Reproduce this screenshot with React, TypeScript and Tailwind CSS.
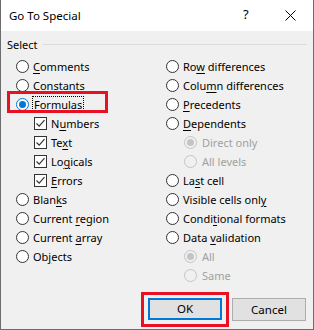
import React from "react";

type Lbl = [string, string, string];

function Radio({ checked = false, disabled = false }: { checked?: boolean; disabled?: boolean }) {
  const border = disabled ? "border-[#c4c4c4]" : checked ? "border-[#0078d7]" : "border-[#333333]";
  const bg = disabled ? "bg-[#f0f0f0]" : "bg-white";
  return (
    <span className={`w-[13px] h-[13px] shrink-0 rounded-full border ${border} ${bg} flex items-center justify-center`}>
      {checked && (
        <span className={`w-[7px] h-[7px] rounded-full ${disabled ? "bg-[#c4c4c4]" : "bg-[#0078d7]"}`} />
      )}
    </span>
  );
}

function Check() {
  return (
    <span className="w-[13px] h-[13px] shrink-0 border border-[#333333] bg-white flex items-center justify-center">
      <svg width="11" height="11" viewBox="0 0 11 11">
        <polyline points="1.5,5.5 4.2,8.2 9.5,2.2" fill="none" stroke="#333333" strokeWidth="1.2" />
      </svg>
    </span>
  );
}

function Text({ l, disabled = false }: { l: Lbl; disabled?: boolean }) {
  return (
    <span className={`whitespace-nowrap ${disabled ? "text-[#a0a0a0]" : "text-black"}`}>
      {l[0]}
      {l[1] && <span className="underline underline-offset-[2px]">{l[1]}</span>}
      {l[2]}
    </span>
  );
}

function RadioRow({ l, checked, disabled, indent = false }: { l: Lbl; checked?: boolean; disabled?: boolean; indent?: boolean }) {
  return (
    <div className={`h-[19px] flex items-center ${indent ? "pl-[18px] gap-[5px]" : "gap-[4px]"}`}>
      <Radio checked={checked} disabled={disabled} />
      <Text l={l} disabled={disabled} />
    </div>
  );
}

function CheckRow({ l }: { l: Lbl }) {
  return (
    <div className="h-[19px] flex items-center gap-[4px] pl-[18px]">
      <Check />
      <Text l={l} />
    </div>
  );
}

export default function App() {
  return (
    <div
      className="w-[314px] h-[330px] bg-[#f0f0f0] border-x border-b border-[#6d6d6d] flex flex-col text-[11px] leading-none text-black"
      style={{ fontFamily: "'Noto Sans', 'Open Sans', sans-serif" }}
    >
      <div className="h-[31px] bg-white flex items-center pl-[8px] relative shrink-0">
        <span className="text-[11.5px]">Go To Special</span>
        <span className="absolute left-[242px] top-[8px] text-[13px]">?</span>
        <svg className="absolute left-[284px] top-[10px]" width="11" height="11" viewBox="0 0 11 11">
          <path d="M0.5 0.5 L10.5 10.5 M10.5 0.5 L0.5 10.5" stroke="#000" strokeWidth="1" />
        </svg>
      </div>

      <div className="h-[25px] flex items-center pl-[6px] pr-[6px] mt-[1px] gap-[5px]">
        <span>Select</span>
        <div className="flex-1 h-px bg-[#dcdcdc]" />
      </div>

      <div className="flex">
        <div className="w-[165px] pl-[15px] flex flex-col">
          <RadioRow l={["", "C", "omments"]} />
          <RadioRow l={["C", "o", "nstants"]} />
          <div className="h-[19px] flex items-center gap-[3px] relative">
            <Radio checked />
            <span className="border border-dotted border-black px-[1px] py-[2px]">
              <Text l={["", "F", "ormulas"]} />
            </span>
            <div className="absolute left-[-9px] top-[-4px] w-[101px] h-[22px] border-[3px] border-[#e81123]" />
          </div>
          <CheckRow l={["N", "u", "mbers"]} />
          <CheckRow l={["Te", "x", "t"]} />
          <CheckRow l={["Lo", "g", "icals"]} />
          <CheckRow l={["", "E", "rrors"]} />
          <RadioRow l={["Blan", "k", "s"]} />
          <RadioRow l={["Current ", "r", "egion"]} />
          <RadioRow l={["Current ", "a", "rray"]} />
          <RadioRow l={["Ob", "j", "ects"]} />
        </div>
        <div className="flex flex-col">
          <RadioRow l={["Ro", "w", " differences"]} />
          <RadioRow l={["Colu", "m", "n differences"]} />
          <RadioRow l={["", "P", "recedents"]} />
          <RadioRow l={["", "D", "ependents"]} />
          <RadioRow l={["Direct only", "", ""]} checked disabled indent />
          <RadioRow l={["All levels", "", ""]} disabled indent />
          <RadioRow l={["La", "s", "t cell"]} />
          <RadioRow l={["Visible cells onl", "y", ""]} />
          <RadioRow l={["Condi", "t", "ional formats"]} />
          <RadioRow l={["Data ", "v", "alidation"]} />
          <RadioRow l={["All", "", ""]} checked disabled indent />
          <RadioRow l={["Same", "", ""]} disabled indent />
        </div>
      </div>

      <div className="flex justify-end gap-[10px] pr-[7px] mt-[13px]">
        <div className="relative">
          <button className="w-[74px] h-[22px] bg-[#e1e1e1] border-2 border-[#0078d7] text-[11.5px] flex items-center justify-center">
            OK
          </button>
          <div className="absolute left-[-7px] top-[-6px] w-[88px] h-[35px] border-[3px] border-[#e81123]" />
        </div>
        <button className="w-[74px] h-[23px] bg-[#e1e1e1] border border-[#adadad] text-[11.5px] flex items-center justify-center">
          Cancel
        </button>
      </div>
    </div>
  );
}
